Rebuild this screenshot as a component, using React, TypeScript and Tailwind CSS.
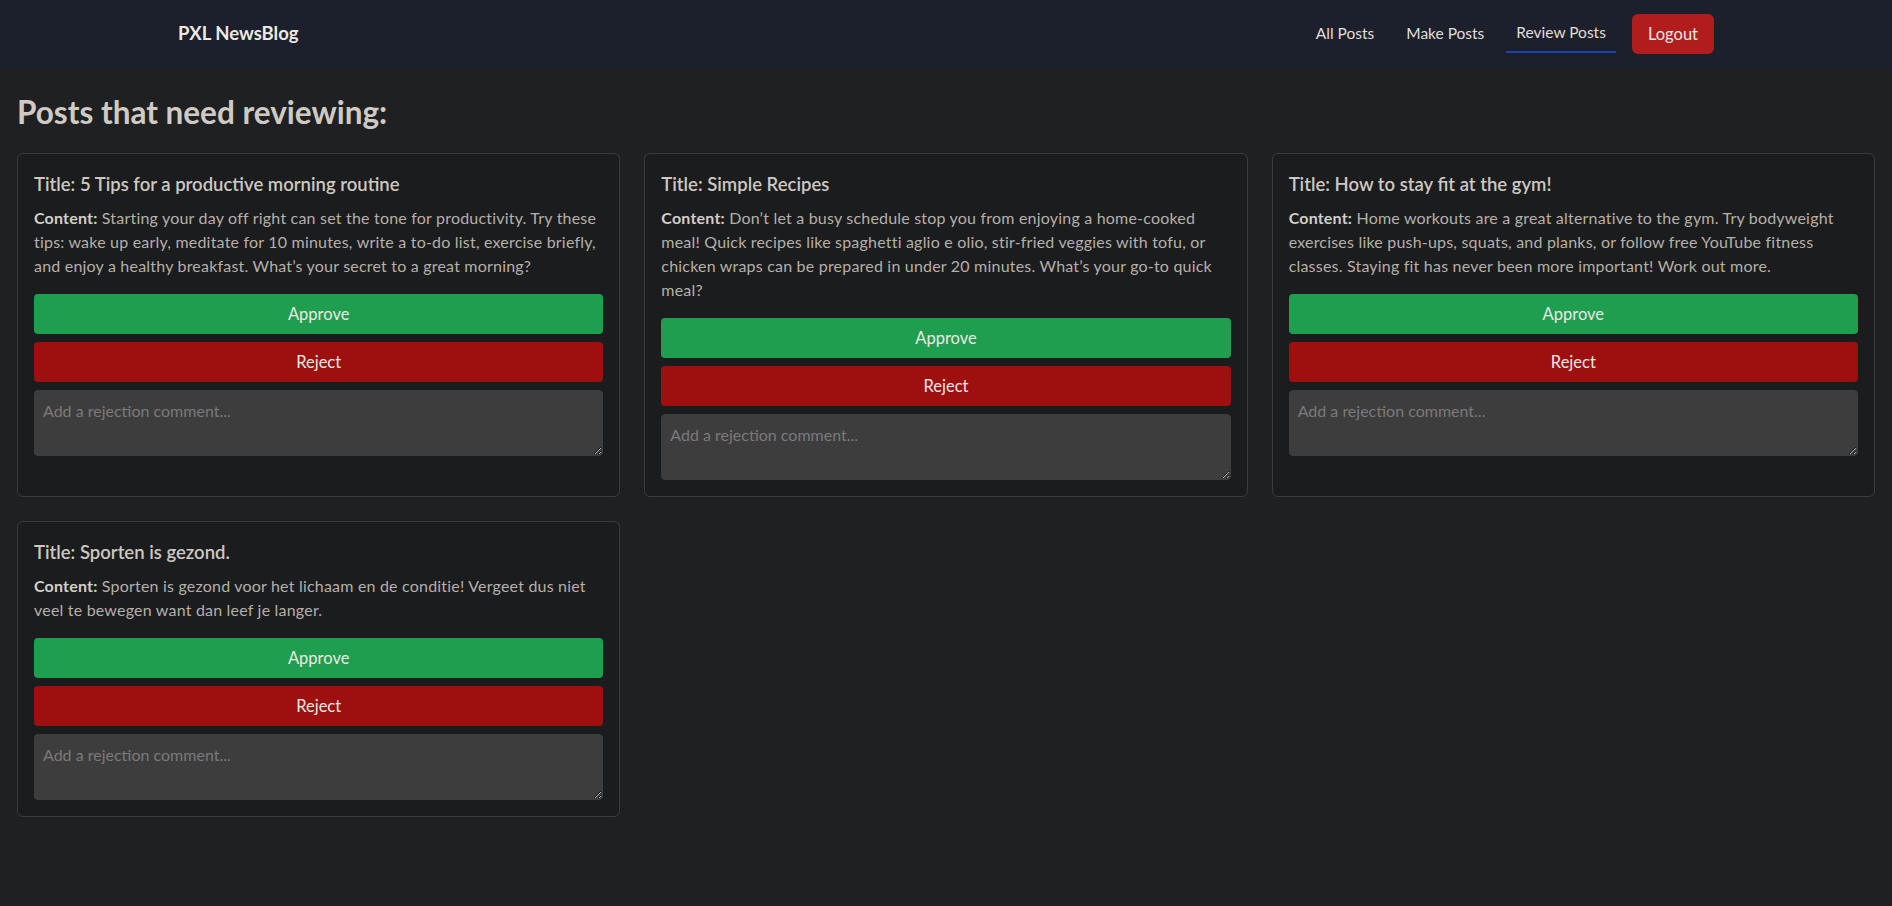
import React from "react";

const posts = [
  {
    title: "5 Tips for a productive morning routine",
    content:
      "Starting your day off right can set the tone for productivity. Try these tips: wake up early, meditate for 10 minutes, write a to-do list, exercise briefly, and enjoy a healthy breakfast. What’s your secret to a great morning?",
  },
  {
    title: "Simple Recipes",
    content:
      "Don’t let a busy schedule stop you from enjoying a home-cooked meal! Quick recipes like spaghetti aglio e olio, stir-fried veggies with tofu, or chicken wraps can be prepared in under 20 minutes. What’s your go-to quick meal?",
  },
  {
    title: "How to stay fit at the gym!",
    content:
      "Home workouts are a great alternative to the gym. Try bodyweight exercises like push-ups, squats, and planks, or follow free YouTube fitness classes. Staying fit has never been more important! Work out more.",
  },
  {
    title: "Sporten is gezond.",
    content:
      "Sporten is gezond voor het lichaam en de conditie! Vergeet dus niet veel te bewegen want dan leef je langer.",
  },
];

function Card({ title, content }: { title: string; content: string }) {
  return (
    <div className="flex flex-col rounded-md border border-[#3a3b3e] bg-[#1b1c1e] p-4">
      <h3 className="mb-2 text-[18.5px] font-semibold leading-[28px] text-[#cdc8c2]">
        Title: {title}
      </h3>
      <p className="text-[16px] leading-6 tracking-[0.2px] text-[#b5b0a8]">
        <span className="font-bold text-[#d3cec8]">Content:</span> {content}
      </p>
      <button className="mt-4 w-full rounded-[4px] bg-[#1e9e4e] py-2 text-[16.5px] leading-6 text-[#ece9e4]">
        Approve
      </button>
      <button className="mt-2 w-full rounded-[4px] bg-[#9e0f10] py-2 text-[16.5px] leading-6 text-[#ece9e4]">
        Reject
      </button>
      <textarea
        rows={2}
        placeholder="Add a rejection comment..."
        className="mt-2 block w-full rounded-[4px] border border-[#3d3d3d] bg-[#3d3d3d] p-2 text-[16px] leading-6 text-[#d0ccc6] placeholder:text-[#7a7a7a] outline-none"
      />
    </div>
  );
}

export default function App() {
  return (
    <div
      className="min-h-[906px] bg-[#1f2022]"
      style={{ fontFamily: "Lato, 'Open Sans', sans-serif" }}
    >
      <nav className="flex h-[68px] items-center justify-between bg-[#1b202c] px-[178px]">
        <div className="text-[18.5px] font-bold text-[#ece9e4]">PXL NewsBlog</div>
        <div className="flex items-center">
          <a className="px-2.5 py-2 text-[15.5px] text-[#e2ded8]">All Posts</a>
          <a className="ml-3 px-2.5 py-2 text-[15.5px] text-[#e2ded8]">Make Posts</a>
          <a className="ml-3 border-b-2 border-[#1e40af] px-2.5 pt-1.5 pb-1.5 text-[15.5px] text-[#e2ded8]">
            Review Posts
          </a>
          <button className="ml-4 h-[40px] rounded-md bg-[#b11d1d] px-4 text-[16.5px] text-[#ece9e4]">
            Logout
          </button>
        </div>
      </nav>
      <main className="px-[17px] pt-[24px] pb-10">
        <h2 className="mb-[21px] text-[31.5px] font-bold leading-10 text-[#cfcac4]">
          Posts that need reviewing:
        </h2>
        <div className="grid grid-cols-3 gap-6">
          {posts.map((p) => (
            <Card key={p.title} title={p.title} content={p.content} />
          ))}
        </div>
      </main>
    </div>
  );
}
